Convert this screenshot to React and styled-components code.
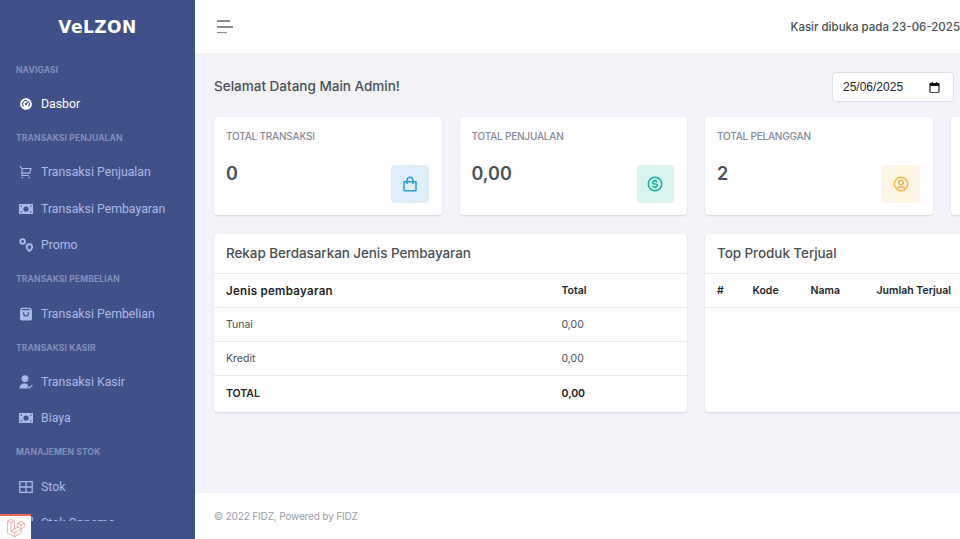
import React from 'react'
import styled, { createGlobalStyle } from 'styled-components'
import { RiDashboard2Fill, RiShoppingCart2Line } from 'react-icons/ri'
import { BiShoppingBag, BiDollarCircle, BiUserCircle } from 'react-icons/bi'
import { FaLaravel } from 'react-icons/fa'

const GlobalStyle = createGlobalStyle`
    html, body {
        margin: 0;
        height: 100%;
        overflow: hidden;
        background: #f3f3f9;
        font-family: "Inter", "Liberation Sans", sans-serif;
    }
    * { box-sizing: border-box; }
`

const Page = styled.div`
    display: flex;
    width: 960px;
    height: 539px;
    overflow: hidden;
`

// sidebar
const Sidebar = styled.aside`
    position: relative;
    flex: 0 0 195px;
    display: flex;
    flex-direction: column;
    background: #405189;
`
const LogoBar = styled.div`
    height: 54px;
    display: flex;
    align-items: center;
    justify-content: center;
`
const Logo = styled.span`
    font-family: "DejaVu Sans", sans-serif;
    font-size: 17px;
    font-weight: 700;
    letter-spacing: 0.5px;
    color: #fff;
`
const LogoE = styled.span`
    position: relative;
    &::after {
        content: "";
        position: absolute;
        right: 1px;
        bottom: 4px;
        width: 2px;
        height: 2px;
        background: #f7b84b;
    }
`
const Nav = styled.nav`
    height: 467px;
    overflow: hidden;
`
const NavLabel = styled.div`
    height: 31.75px;
    display: flex;
    align-items: center;
    padding-left: 16px;
    font-size: 8.5px;
    font-weight: 700;
    letter-spacing: 0.14px;
    color: #838fb9;
`
const NavItem = styled.div`
    height: 36.5px;
    display: flex;
    align-items: center;
    gap: 8px;
    padding-left: 19px;
    font-family: "Roboto", "Liberation Sans", sans-serif;
    font-size: 12.3px;
    color: ${p => (p.$active ? '#fff' : '#abb9e8')};
    svg { flex: 0 0 14px; width: 14px; height: 14px; }
`
const DebugBadge = styled.div`
    position: absolute;
    left: 0;
    bottom: 0;
    width: 31px;
    height: 25px;
    display: flex;
    align-items: center;
    justify-content: center;
    background: #fff;
    border-top: 2px solid #f4645f;
    color: #f0807c;
`

// drawn icons
const Banknote = () => (
    <svg viewBox="0 0 14 14">
        <path fill="currentColor" fillRule="evenodd" d="M0 2h14v10H0zM7 4.400a2.600 2.600 0 1 0 0 5.200 2.600 2.600 0 0 0 0-5.200zM1.600 3.400v1.400h1.400V3.400zm9.400 0v1.400h1.400V3.400zM1.600 9.200v1.400h1.400V9.200zm9.400 0v1.400h1.400V9.200z" />
    </svg>
)
const PromoIcon = () => (
    <svg viewBox="0 0 14 14" fill="none" stroke="currentColor" strokeWidth="1.9">
        <circle cx="3.600" cy="3.400" r="2.300" />
        <path d="M10.400 13.200C8.600 11.500 7.600 10.300 7.600 9a2.800 2.800 0 0 1 5.600 0c0 1.300-1 2.500-2.800 4.200z" />
    </svg>
)
const PurchaseIcon = () => (
    <svg viewBox="0 0 14 14">
        <path fill="currentColor" fillRule="evenodd" d="M2.500.800h9L13 3.200v8.800c0 .8-.6 1.400-1.400 1.400H2.400c-.8 0-1.400-.6-1.400-1.400V3.200zM3.400 2l-.8 1.200h8.800L10.600 2zM4 5.200v1.300c0 1.700 1.300 3 3 3s3-1.300 3-3V5.200H8.800v1.300c0 1-.8 1.800-1.800 1.800s-1.800-.8-1.800-1.800V5.200z" />
    </svg>
)
const CashierIcon = () => (
    <svg viewBox="0 0 14 14">
        <circle cx="6" cy="3.600" r="3.400" fill="currentColor" />
        <path fill="currentColor" d="M0.400 13.600c0-3 2-5 5.600-5 1 0 1.900.2 2.600.5v4.500z" />
        <path fill="none" stroke="currentColor" strokeWidth="1.100" d="M9 11.600l1.400 1.400 3-2.800" />
    </svg>
)
const StockIcon = () => (
    <svg viewBox="0 0 14 14" fill="none" stroke="currentColor" strokeWidth="1.300">
        <path d="M.800 1.600h12.400v10.800H.800zM7 1.600v10.800M.800 7h12.400" />
    </svg>
)
const CalendarIcon = () => (
    <svg viewBox="0 0 12 12" width="11" height="11">
        <path fill="#111" fillRule="evenodd" d="M3 0h1.200v1.200h3.600V0H9v1.200h1.400c.6 0 1.100.5 1.100 1.100v8.400c0 .6-.5 1.100-1.100 1.100H1.600c-.6 0-1.100-.5-1.100-1.100V2.300c0-.6.5-1.100 1.100-1.100H3zM1.700 4.400v6.400h8.600V4.400z" />
    </svg>
)

// main
const Main = styled.main`
    flex: 1;
    min-width: 0;
    display: flex;
    flex-direction: column;
    overflow: hidden;
`
const Topbar = styled.header`
    flex: 0 0 54.5px;
    display: flex;
    align-items: center;
    justify-content: space-between;
    padding-left: 22px;
    background: #fff;
    border-bottom: 1px solid #e9ebec;
`
const Hamburger = styled.div`
    display: flex;
    flex-direction: column;
    gap: 4px;
`
const HamburgerLine = styled.span`
    display: block;
    height: 1.6px;
    width: ${p => p.$width}px;
    background: #878a99;
`
const CashierNote = styled.div`
    font-size: 11.5px;
    font-weight: 500;
    white-space: nowrap;
    color: #495057;
`
const Content = styled.div`
    flex: 1;
    padding: 17.5px 6px 0 19px;
`
const TitleRow = styled.div`
    display: flex;
    align-items: center;
    justify-content: space-between;
    height: 30px;
    margin-bottom: 15px;
`
const Welcome = styled.h4`
    margin: 0 0 2px;
    font-size: 13.5px;
    font-weight: 500;
    color: #495057;
`
const DateField = styled.div`
    width: 122px;
    height: 30px;
    display: flex;
    align-items: center;
    justify-content: space-between;
    padding: 0 13px 0 10px;
    background: #fff;
    border: 1px solid #dde1e5;
    border-radius: 4px;
    font-family: "Liberation Sans", sans-serif;
    font-size: 12px;
    color: #212529;
`
const StatGrid = styled.div`
    display: grid;
    grid-template-columns: repeat(4, 227.5px);
    gap: 18px;
    margin-bottom: 18.5px;
`
const StatCard = styled.div`
    height: 98px;
    padding: 12px 13px 0 12px;
    background: #fff;
    border-radius: 4px;
    box-shadow: 0 1px 2px rgba(56, 65, 74, 0.15);
`
const StatLabel = styled.div`
    height: 15px;
    line-height: 15px;
    font-size: 10px;
    font-weight: 500;
    letter-spacing: -0.2px;
    color: #878a99;
`
const StatRow = styled.div`
    display: flex;
    align-items: flex-start;
    justify-content: space-between;
    margin-top: 21px;
`
const StatValue = styled.div`
    margin-top: -3px;
    font-size: 18px;
    line-height: 24px;
    font-weight: 600;
    color: #495057;
`
const StatIcon = styled.div`
    width: 37.5px;
    height: 37.5px;
    display: flex;
    align-items: center;
    justify-content: center;
    border-radius: 4px;
    font-size: 18px;
    color: ${p => p.$color};
    background: ${p => p.$bg};
`
const PanelGrid = styled.div`
    display: grid;
    grid-template-columns: repeat(2, 473px);
    gap: 18px;
`
const Panel = styled.section`
    height: 178.5px;
    background: #fff;
    border-radius: 4px;
    box-shadow: 0 1px 2px rgba(56, 65, 74, 0.15);
`
const PanelTitle = styled.h5`
    margin: 0;
    height: 40.5px;
    display: flex;
    align-items: center;
    padding-left: 12px;
    font-size: 13.5px;
    font-weight: 500;
    letter-spacing: -0.08px;
    color: #495057;
    border-bottom: 1px solid #e9ebec;
`
const Row = styled.div`
    display: grid;
    grid-template-columns: ${p => p.$cols};
    align-items: center;
    height: 34px;
    padding-left: 12px;
    font-size: 10.5px;
    font-weight: ${p => (p.$bold ? 600 : 400)};
    color: ${p => (p.$bold ? '#212529' : '#495057')};
    border-bottom: ${p => (p.$last ? 'none' : '1px solid #e9ebec')};
`
const WideCell = styled.span`
    font-size: 11.5px;
    letter-spacing: 0.3px;
`
const Footer = styled.footer`
    flex: 0 0 46px;
    display: flex;
    align-items: center;
    padding-left: 19px;
    background: #fff;
    font-size: 10px;
    letter-spacing: -0.15px;
    color: #98a0a8;
`

const stats = [
    { label: 'TOTAL TRANSAKSI', value: '0', Icon: BiShoppingBag, color: '#299cdb', bg: '#dfeffa' },
    { label: 'TOTAL PENJUALAN', value: '0,00', Icon: BiDollarCircle, color: '#0ab39c', bg: '#daf4f0' },
    { label: 'TOTAL PELANGGAN', value: '2', Icon: BiUserCircle, color: '#f7b84b', bg: '#fef4e4' },
]

const PAY_COLS = '335.5px 1fr'
const TOP_COLS = '35.5px 58px 66px 1fr'

const App = () => {
    return (
        <Page>
            <GlobalStyle />
            <Sidebar>
                <LogoBar>
                    <Logo>V<LogoE>e</LogoE>LZON</Logo>
                </LogoBar>
                <Nav>
                    <NavLabel>NAVIGASI</NavLabel>
                    <NavItem $active><RiDashboard2Fill />Dasbor</NavItem>
                    <NavLabel>TRANSAKSI PENJUALAN</NavLabel>
                    <NavItem><RiShoppingCart2Line />Transaksi Penjualan</NavItem>
                    <NavItem><Banknote />Transaksi Pembayaran</NavItem>
                    <NavItem><PromoIcon />Promo</NavItem>
                    <NavLabel>TRANSAKSI PEMBELIAN</NavLabel>
                    <NavItem><PurchaseIcon />Transaksi Pembelian</NavItem>
                    <NavLabel>TRANSAKSI KASIR</NavLabel>
                    <NavItem><CashierIcon />Transaksi Kasir</NavItem>
                    <NavItem><Banknote />Biaya</NavItem>
                    <NavLabel>MANAJEMEN STOK</NavLabel>
                    <NavItem><StockIcon />Stok</NavItem>
                    <NavItem><StockIcon />Stok Opname</NavItem>
                </Nav>
                <DebugBadge><FaLaravel size={18} /></DebugBadge>
            </Sidebar>
            <Main>
                <Topbar>
                    <Hamburger>
                        <HamburgerLine $width={13} />
                        <HamburgerLine $width={16} />
                        <HamburgerLine $width={10} />
                    </Hamburger>
                    <CashierNote>Kasir dibuka pada 23-06-2025</CashierNote>
                </Topbar>
                <Content>
                    <TitleRow>
                        <Welcome>Selamat Datang Main Admin!</Welcome>
                        <DateField>25/06/2025<CalendarIcon /></DateField>
                    </TitleRow>
                    <StatGrid>
                        {stats.map(s => (
                            <StatCard key={s.label}>
                                <StatLabel>{s.label}</StatLabel>
                                <StatRow>
                                    <StatValue>{s.value}</StatValue>
                                    <StatIcon $color={s.color} $bg={s.bg}><s.Icon /></StatIcon>
                                </StatRow>
                            </StatCard>
                        ))}
                        <StatCard />
                    </StatGrid>
                    <PanelGrid>
                        <Panel>
                            <PanelTitle>Rekap Berdasarkan Jenis Pembayaran</PanelTitle>
                            <Row $cols={PAY_COLS} $bold><WideCell>Jenis pembayaran</WideCell><span>Total</span></Row>
                            <Row $cols={PAY_COLS}><span>Tunai</span><span>0,00</span></Row>
                            <Row $cols={PAY_COLS}><span>Kredit</span><span>0,00</span></Row>
                            <Row $cols={PAY_COLS} $bold $last><span>TOTAL</span><span>0,00</span></Row>
                        </Panel>
                        <Panel>
                            <PanelTitle>Top Produk Terjual</PanelTitle>
                            <Row $cols={TOP_COLS} $bold>
                                <span>#</span><span>Kode</span><span>Nama</span><span>Jumlah Terjual</span>
                            </Row>
                        </Panel>
                    </PanelGrid>
                </Content>
                <Footer>© 2022 FIDZ, Powered by FIDZ</Footer>
            </Main>
        </Page>
    )
}

export default App
